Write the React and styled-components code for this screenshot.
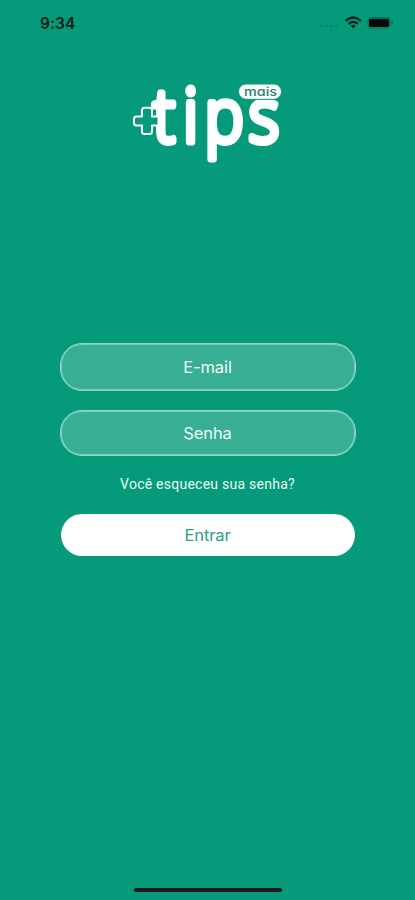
import React from "react";
import styled, { createGlobalStyle } from "styled-components";

const GlobalStyle = createGlobalStyle`
  * { box-sizing: border-box; }
  body { margin: 0; background: #059a79; }
`;

const Screen = styled.main`
  width: 100%;
  height: 900px;
  background: #059a79;
  display: flex;
  flex-direction: column;
  align-items: center;
  overflow: hidden;
  font-family: Inter, "Liberation Sans", sans-serif;
`;

const StatusBar = styled.header`
  width: 100%;
  height: 46px;
  padding: 0 20px 0 40px;
  display: flex;
  align-items: center;
  justify-content: space-between;
  color: #06231c;
  flex: none;
`;

const Time = styled.span`
  font-size: 15.5px;
  font-weight: 600;
  letter-spacing: 0.1px;
`;

const Logo = styled.svg`
  width: 160px;
  height: 90px;
  margin-top: 32px;
  flex: none;
  display: block;
  overflow: visible;
`;

const Wordmark = styled.text`
  font: 300 74px "Open Sans", sans-serif;
  fill: #fff;
  stroke: #fff;
  stroke-width: 7px;
  stroke-linejoin: round;
`;

const Tag = styled.text`
  font: 500 12.5px Inter, sans-serif;
  font-feature-settings: "cv11";
  fill: #27826c;
`;

const LoginForm = styled.form`
  width: 296px;
  margin-top: 175px;
  display: flex;
  flex-direction: column;
`;

const Field = styled.input`
  height: ${(p) => p.$height}px;
  margin: 0 0 19px;
  padding: 0 20px 1px;
  border: 1px solid #97d5c7;
  box-shadow: inset 0 0 0 1px #7fcbb9;
  border-radius: 22px;
  background: #38ae94;
  color: #f2fffb;
  text-align: center;
  font: 400 16.5px Inter, "Liberation Sans", sans-serif;
  letter-spacing: -0.1px;
  outline: none;
  &::placeholder { color: #f2fffb; opacity: 1; }
`;

const ForgotLink = styled.a`
  align-self: center;
  margin-top: -1px;
  color: #e9fbf5;
  font: 400 14px/20px Roboto, sans-serif;
  letter-spacing: 0.25px;
  text-decoration: none;
  white-space: nowrap;
`;

const SubmitButton = styled.button`
  height: 42px;
  margin: 20px 1px 0;
  padding: 0;
  border: 0;
  border-radius: 21px;
  background: #fff;
  color: #2ca184;
  font: 400 16.5px Inter, "Liberation Sans", sans-serif;
  letter-spacing: -0.1px;
`;

const HomeIndicator = styled.div`
  width: 148px;
  height: 4px;
  margin: auto 0 8px;
  border-radius: 2px;
  background: #24171b;
`;

function StatusIcons() {
  return (
    <svg width="76" height="16" viewBox="0 0 76 16">
      <g fill="#087e64">
        <rect x="1" y="10" width="3" height="2" rx="1" />
        <rect x="6" y="10" width="3" height="2" rx="1" />
        <rect x="11" y="10" width="3" height="2" rx="1" />
        <rect x="16" y="10" width="3" height="2" rx="1" />
      </g>
      <g fill="none" stroke="#04251d" strokeWidth="2.2">
        <path d="M26.5 5.8Q34.2-.8 41.9 5.8" />
        <path d="M29.5 8.8Q34.2 4.9 38.9 8.8" />
      </g>
      <path d="M31.6 10.6Q34.2 8.8 36.8 10.6L34.2 13.4Z" fill="#04251d" />
      <rect x="49" y="2.5" width="22" height="10.5" rx="2.6" fill="none" stroke="#087056" />
      <rect x="50" y="3.7" width="20" height="8.2" rx="1.4" fill="#020b09" />
      <path d="M72.3 5.3Q76 7.7 72.3 10.1Z" fill="#087056" />
    </svg>
  );
}

function TipsLogo() {
  return (
    <Logo viewBox="127 78 160 90" role="img" aria-label="mais tips">
      <Wordmark transform="translate(0 142.3) scale(.88 1)" x="173 207 231.5 281.5">tips</Wordmark>
      <rect x="237.5" y="84" width="43" height="15.3" rx="7.6" fill="#fff" stroke="#059a79" />
      <Tag x="243" y="95.7" textLength="33" lengthAdjust="spacingAndGlyphs">mais</Tag>
      <path d="M143.500 107.800h5q2.500 0 2.500 2.500v6.200h6.500v9h-6.500v6q0 2.500-2.500 2.500h-5q-2.500 0-2.500-2.500v-6h-5.500q-2.500 0-2.500-2.500v-4q0-2.500 2.500-2.500h5.500v-6.200q0-2.500 2.500-2.500Z" fill="#059a79" stroke="#fff" strokeWidth="2" strokeLinejoin="round" />
    </Logo>
  );
}

export default function App() {
  return (
    <Screen>
      <GlobalStyle />
      <StatusBar>
        <Time>9:34</Time>
        <StatusIcons />
      </StatusBar>
      <TipsLogo />
      <LoginForm onSubmit={(e) => e.preventDefault()}>
        <Field $height={48} type="email" placeholder="E-mail" />
        <Field $height={46} type="password" placeholder="Senha" />
        <ForgotLink>Você esqueceu sua senha?</ForgotLink>
        <SubmitButton type="submit">Entrar</SubmitButton>
      </LoginForm>
      <HomeIndicator />
    </Screen>
  );
}
